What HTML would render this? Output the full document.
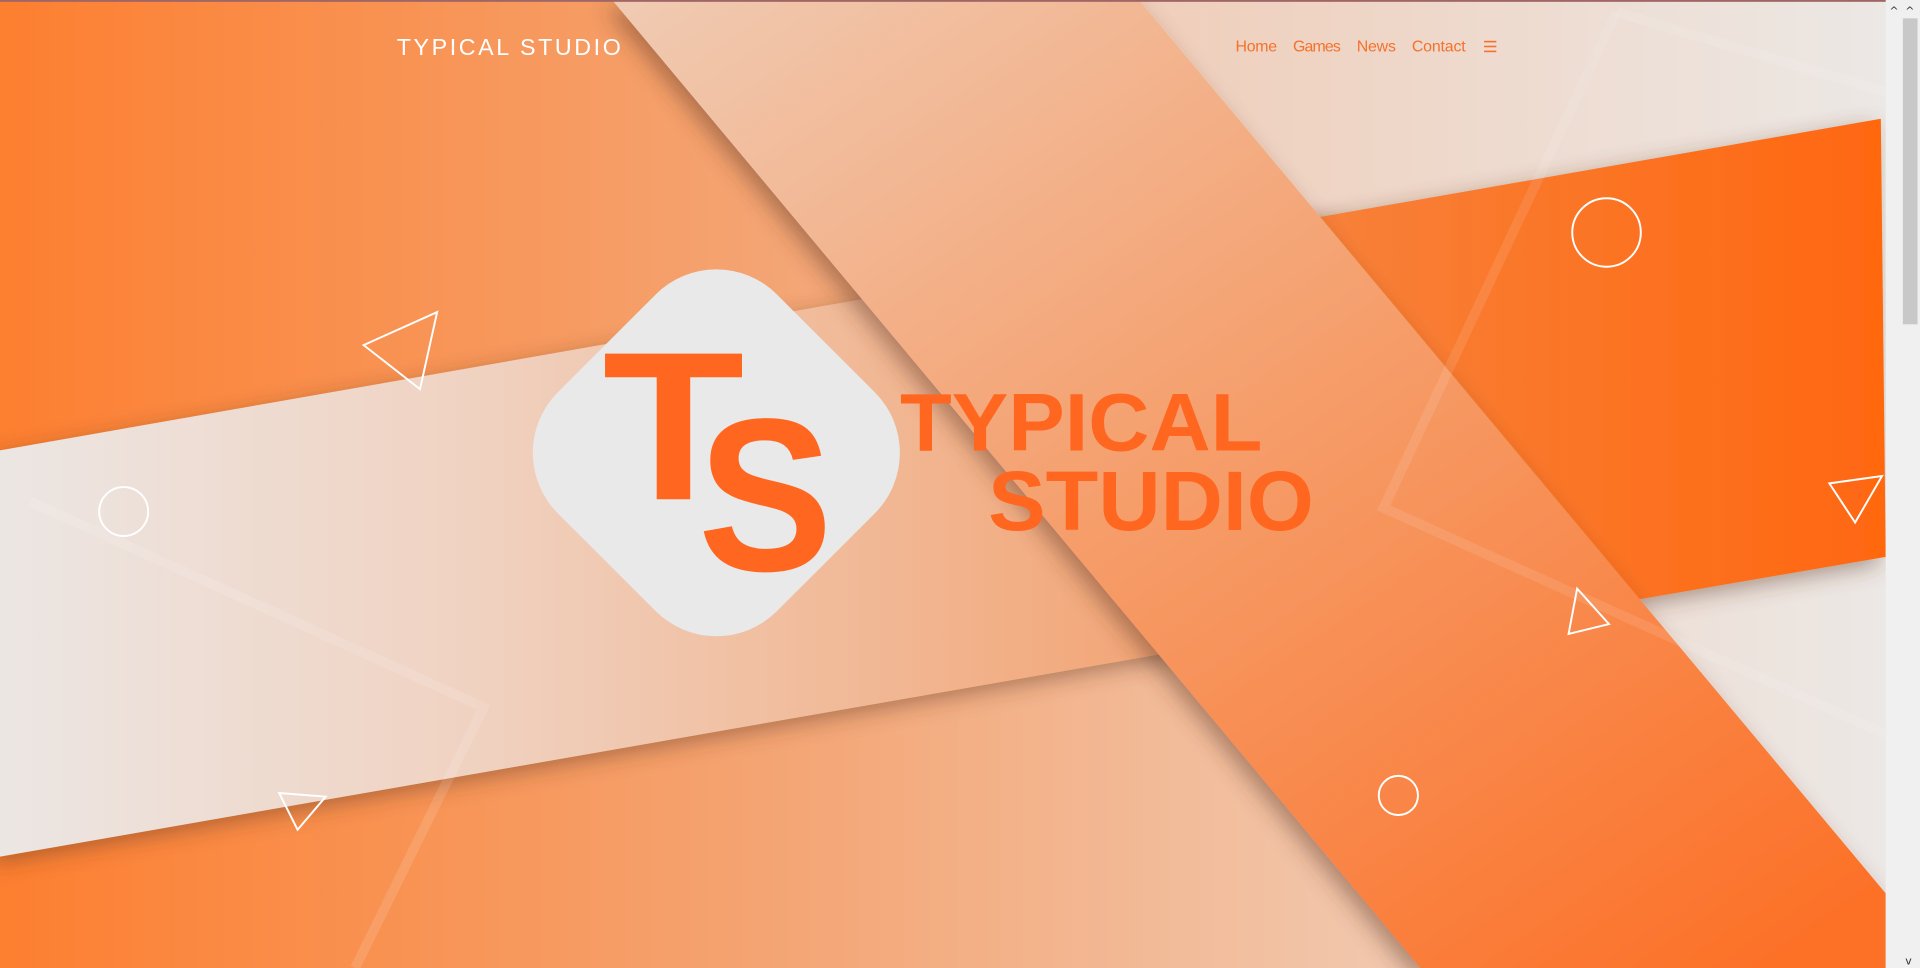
<!DOCTYPE html>
<html><head><meta charset="utf-8"><style>
html,body{margin:0;padding:0;overflow:hidden;background:#ebe8e6}
svg{display:block}
</style></head><body>
<svg width="1920" height="968" viewBox="0 0 1568 791" preserveAspectRatio="none" xmlns="http://www.w3.org/2000/svg">
<defs>
<linearGradient id="gBase" x1="0" y1="0" x2="1" y2="0">
<stop offset="0.55" stop-color="#f0cbb5"/><stop offset="1" stop-color="#ece9e7"/></linearGradient>
<linearGradient id="gLeft" x1="0" y1="0" x2="1" y2="0">
<stop offset="0" stop-color="#fd7f30"/><stop offset="0.55" stop-color="#f4a574"/><stop offset="1" stop-color="#f1c9b0"/></linearGradient>
<linearGradient id="gLight" x1="0" y1="0" x2="1" y2="0">
<stop offset="0" stop-color="#ece6e3"/><stop offset="0.35" stop-color="#f0d2c1"/><stop offset="0.85" stop-color="#f2a677"/></linearGradient>
<linearGradient id="gRight" x1="0" y1="0" x2="1" y2="0">
<stop offset="0" stop-color="#f68540"/><stop offset="1" stop-color="#ff6710"/></linearGradient>
<linearGradient id="gDiag" x1="0" y1="0" x2="0.9" y2="1">
<stop offset="0" stop-color="#f0cbb3"/><stop offset="0.45" stop-color="#f5a170"/><stop offset="1" stop-color="#fc7128"/></linearGradient>
<filter id="sh" x="-20%" y="-20%" width="140%" height="140%"><feDropShadow dx="-6" dy="6" stdDeviation="9" flood-color="#5a3020" flood-opacity="0.45"/></filter>
</defs>
<rect width="1568" height="791" fill="url(#gBase)"/>
<polygon points="0,0 500,0 1160,791 0,791" fill="url(#gLeft)"/>
<polygon points="0,368 1100,175 1100,508 0,700" fill="url(#gLight)" filter="url(#sh)"/>
<polygon points="1000,191 1536,97 1540,455 1000,548" fill="url(#gRight)" filter="url(#sh)"/>
<polyline points="25,410 395,578 290,791" fill="none" stroke="#fff" stroke-opacity="0.12" stroke-width="8"/>
<polygon points="500,0 930,0 1540,730 1540,791 1160,791" fill="url(#gDiag)" filter="url(#sh)"/>
<polyline points="1320,10 1130,415 1540,600" fill="none" stroke="#fff" stroke-opacity="0.1" stroke-width="8"/>
<line x1="1320" y1="10" x2="1540" y2="75" stroke="#fff" stroke-opacity="0.1" stroke-width="8"/>
<g fill="none" stroke="#fff" stroke-width="1.6">
<circle cx="1312" cy="190" r="28"/><circle cx="101" cy="418" r="20"/><circle cx="1142" cy="650" r="16"/>
<polygon points="297,282 357,255 343,318"/><polygon points="1494,395 1537,389 1515,427"/>
<polygon points="1281,518 1288,481 1314,510"/><polygon points="228,648 266,651 243,678"/>
</g>
<rect x="458.5" y="243.5" width="253" height="253" rx="70" fill="#e9e9e9" transform="rotate(45 585 370)"/>
<g fill="#ff661f" font-family="Liberation Sans, sans-serif" font-weight="bold">
<text x="492" y="408" font-size="173" textLength="116" lengthAdjust="spacingAndGlyphs">T</text>
<text x="570" y="466" font-size="178" textLength="110" lengthAdjust="spacingAndGlyphs">S</text>
<text x="735" y="368" font-size="67" textLength="296" lengthAdjust="spacingAndGlyphs">TYPICAL</text>
<text x="807" y="433" font-size="69" textLength="266" lengthAdjust="spacingAndGlyphs">STUDIO</text>
</g>
<text x="324" y="45" font-family="Liberation Sans, sans-serif" font-size="19" fill="#fff" textLength="183" lengthAdjust="spacing">TYPICAL STUDIO</text>
<g font-family="Liberation Sans, sans-serif" font-size="13" fill="#f4722c">
<text x="1009" y="42" textLength="34">Home</text>
<text x="1056" y="42" textLength="39">Games</text>
<text x="1108" y="42" textLength="32">News</text>
<text x="1153" y="42" textLength="44">Contact</text>
</g>
<g stroke="#f4722c" stroke-width="1.3"><line x1="1212" y1="34" x2="1222" y2="34"/><line x1="1212" y1="38" x2="1222" y2="38"/><line x1="1212" y1="42" x2="1222" y2="42"/></g>
<rect x="0" y="0" width="1568" height="1.5" fill="#a06565"/>
<rect x="1540" y="0" width="28" height="791" fill="#f0f0f0"/>
<rect x="1554" y="15" width="12" height="250" fill="#c8c8c8"/>
<text x="1543" y="12" font-size="9" font-family="DejaVu Sans, sans-serif" fill="#333">^</text>
<text x="1556" y="12" font-size="9" font-family="DejaVu Sans, sans-serif" fill="#333">^</text>
<text x="1556" y="788" font-size="9" font-family="DejaVu Sans, sans-serif" fill="#333">v</text>
</svg>
</body></html>
